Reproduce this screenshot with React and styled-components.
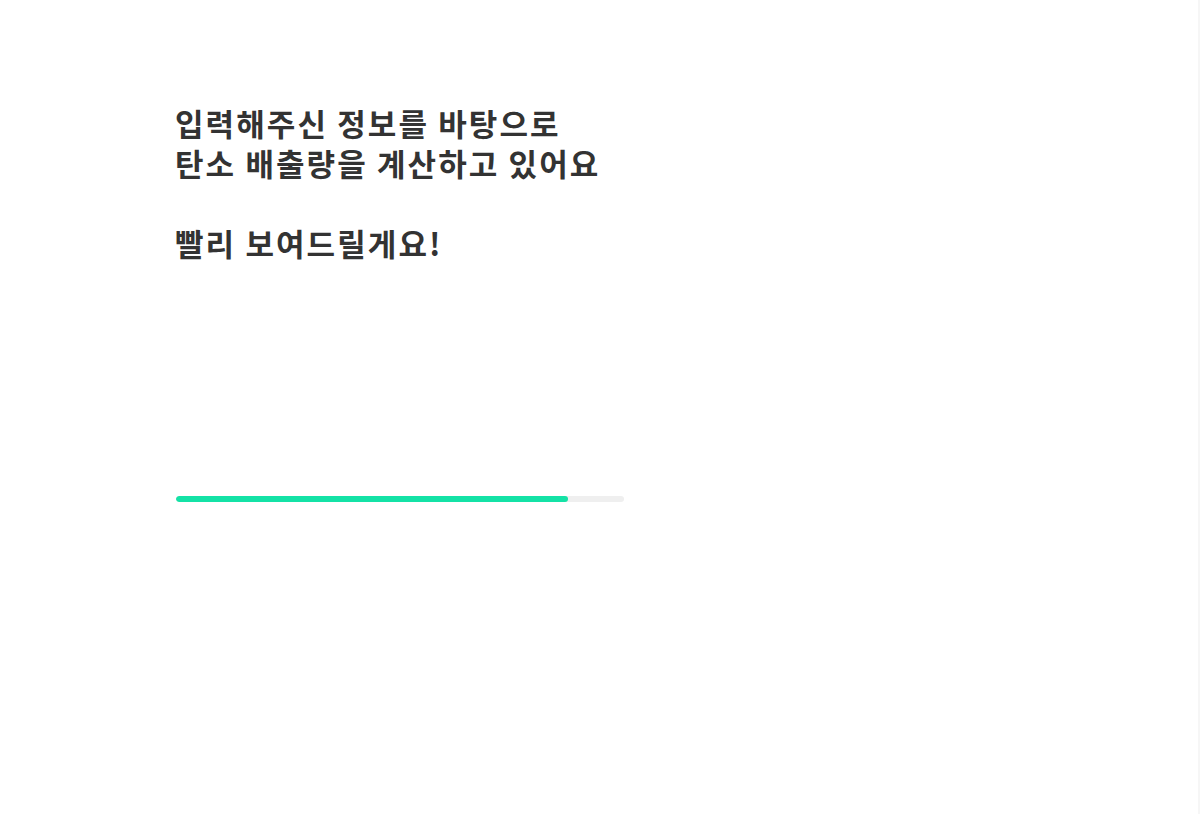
import React from "react";
import styled, { createGlobalStyle } from "styled-components";

const GlobalStyle = createGlobalStyle`
  html, body {
    margin: 0;
    padding: 0;
    background: #ffffff;
  }
  body {
    font-family: "Noto Sans CJK KR", "Noto Sans", sans-serif;
  }
`;

const Page = styled.main`
  box-sizing: border-box;
  width: 1200px;
  height: 814px;
  padding: 103px 0 0 175px;
  border-right: 2px solid #f6f6f6;
  display: flex;
  flex-direction: column;
`;

const Message = styled.h1`
  margin: 0;
  font-size: 31px;
  line-height: 40px;
  font-weight: 700;
  color: #333333;
  letter-spacing: 2.1px;
  white-space: pre-line;
`;

const Track = styled.div`
  margin-top: 233px;
  margin-left: 1px;
  width: 448px;
  height: 6px;
  border-radius: 3px;
  background: #efefef;
  overflow: hidden;
`;

const Fill = styled.div`
  height: 100%;
  border-radius: 3px;
  background: #14e2a6;
`;

export default function App() {
  const progress = 87.5;
  return (
    <>
      <GlobalStyle />
      <Page>
        <Message>
          {"입력해주신 정보를 바탕으로\n탄소 배출량을 계산하고 있어요\n\n빨리 보여드릴게요!"}
        </Message>
        <Track>
          <Fill style={{ width: `${progress}%` }} />
        </Track>
      </Page>
    </>
  );
}
